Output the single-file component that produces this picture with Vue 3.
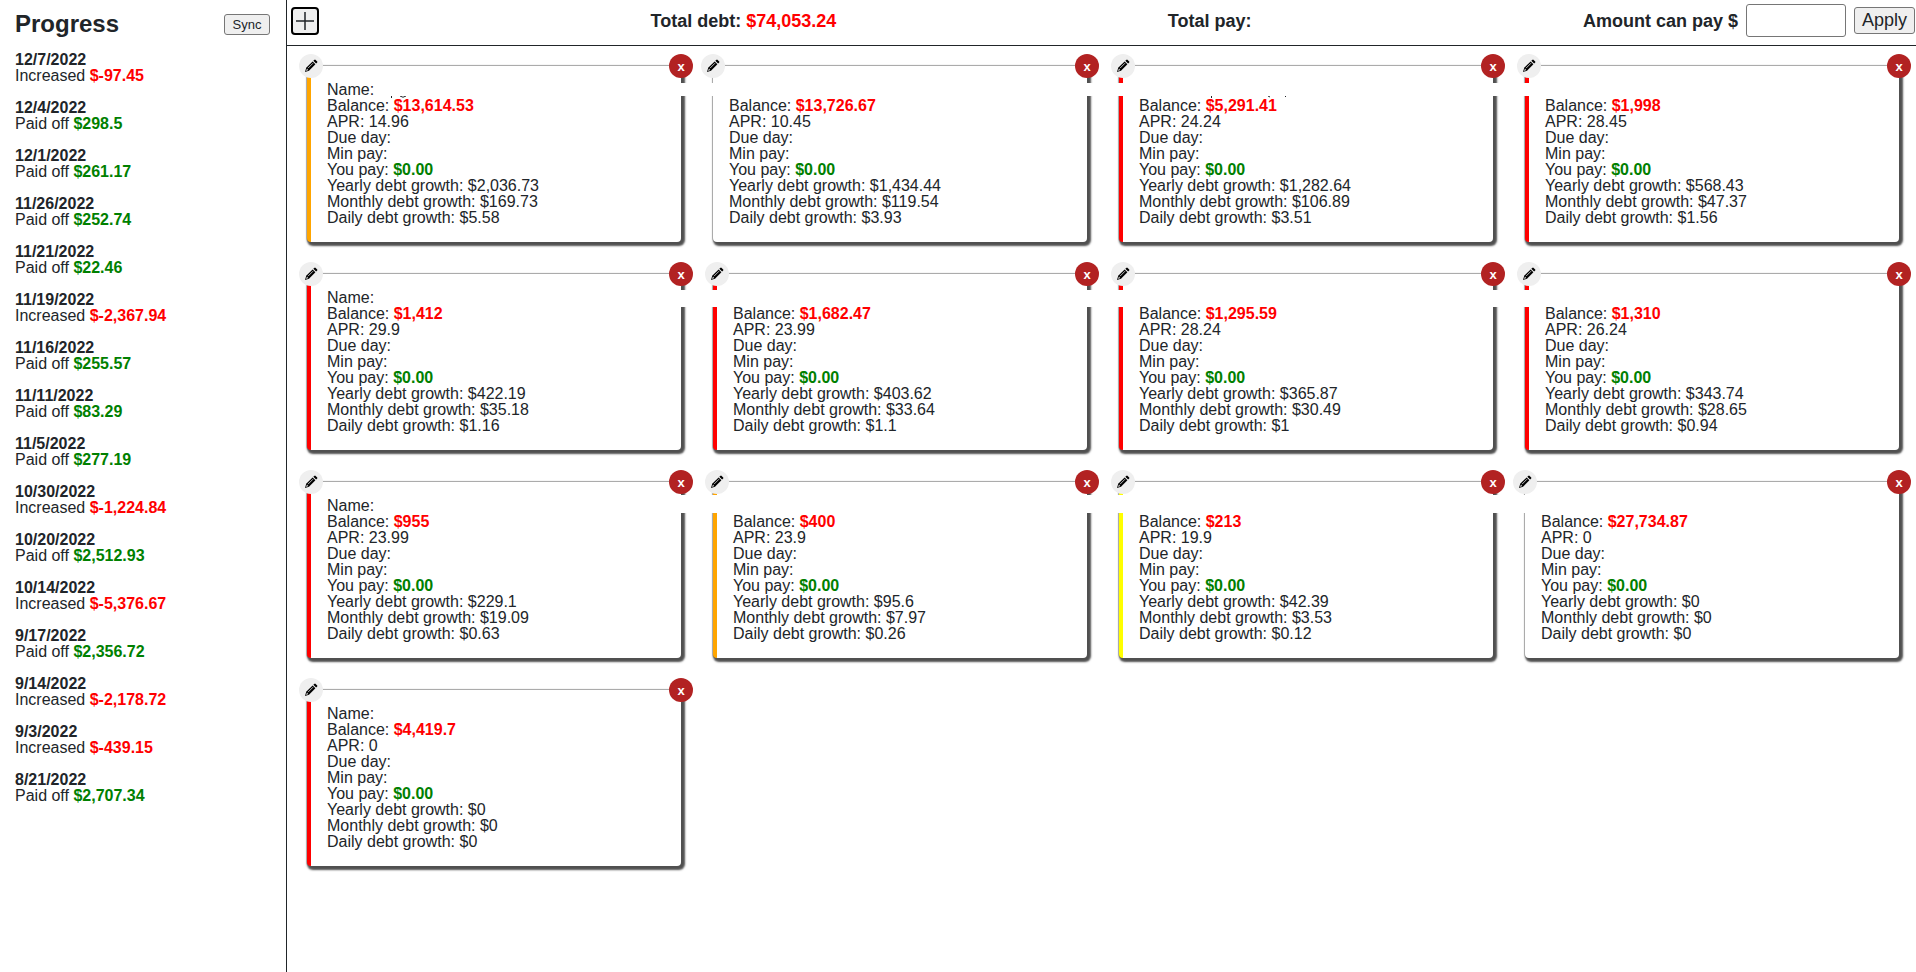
<script setup>
import { ref } from 'vue'

const amount = ref('')

const progress = [
  ['12/7/2022', '-97.45'],
  ['12/4/2022', '298.5'],
  ['12/1/2022', '261.17'],
  ['11/26/2022', '252.74'],
  ['11/21/2022', '22.46'],
  ['11/19/2022', '-2,367.94'],
  ['11/16/2022', '255.57'],
  ['11/11/2022', '83.29'],
  ['11/5/2022', '277.19'],
  ['10/30/2022', '-1,224.84'],
  ['10/20/2022', '2,512.93'],
  ['10/14/2022', '-5,376.67'],
  ['9/17/2022', '2,356.72'],
  ['9/14/2022', '-2,178.72'],
  ['9/3/2022', '-439.15'],
  ['8/21/2022', '2,707.34'],
].map(([date, value]) => ({ date, value, up: value.startsWith('-') }))

// Paths of the name descenders that stay visible below the cover
const tails = {
  0: 'M80.5 0V2M89 0Q92 2.5 95 0',
  2: 'M88.5 0V2M145 0L147 1M162 1L163 0',
}

// level, balance, apr, yearly, monthly, daily, extent and band of the name cover
const debts = [
  ['orange', '13,614.53', '14.96', '2,036.73', '169.73', '5.58', 'after', 'slim'],
  ['none', '13,726.67', '10.45', '1,434.44', '119.54', '3.93', 'full', 'slim'],
  ['red', '5,291.41', '24.24', '1,282.64', '106.89', '3.51', 'full', 'slim'],
  ['red', '1,998', '28.45', '568.43', '47.37', '1.56', 'before', 'slim'],
  ['red', '1,412', '29.9', '422.19', '35.18', '1.16', 'after', 'mid'],
  ['red', '1,682.47', '23.99', '403.62', '33.64', '1.1', 'full', 'mid'],
  ['red', '1,295.59', '28.24', '365.87', '30.49', '1', 'full', 'mid'],
  ['red', '1,310', '26.24', '343.74', '28.65', '0.94', 'before', 'mid'],
  ['red', '955', '23.99', '229.1', '19.09', '0.63', 'after', 'high'],
  ['orange', '400', '23.9', '95.6', '7.97', '0.26', 'full', 'high'],
  ['yellow', '213', '19.9', '42.39', '3.53', '0.12', 'full', 'high'],
  ['none', '27,734.87', '0', '0', '0', '0', 'before', 'high'],
  ['red', '4,419.7', '0', '0', '0', '0', 'open', ''],
].map(([level, balance, apr, yearly, monthly, daily, cover, band]) => ({
  level, balance, apr, yearly, monthly, daily, cover, band,
}))
</script>

<template>
  <div class="app">
    <aside class="sidebar">
      <div class="sidebar-head">
        <h1>Progress</h1>
        <button type="button" class="sync">Sync</button>
      </div>
      <ul class="history">
        <li v-for="p in progress" :key="p.date">
          <strong>{{ p.date }}</strong>
          <div>{{ p.up ? 'Increased' : 'Paid off' }} <b :class="p.up ? 'bad' : 'good'">${{ p.value }}</b></div>
        </li>
      </ul>
    </aside>

    <main class="main">
      <header class="bar">
        <button type="button" class="add" aria-label="Add debt">
          <svg width="18" height="18" viewBox="0 0 18 18"><path d="M9 0V18M0 9H18" stroke="#212529" stroke-width="1.5" /></svg>
        </button>
        <div>Total debt: <span class="bad">$74,053.24</span></div>
        <div>Total pay:</div>
        <form class="pay" @submit.prevent>
          <label for="amount">Amount can pay $</label>
          <input id="amount" v-model="amount" type="text">
          <button type="submit">Apply</button>
        </form>
      </header>

      <section class="grid">
        <article v-for="(d, i) in debts" :key="i" class="card" :class="d.level">
          <div>Name:</div>
          <div>Balance: <b class="bad">${{ d.balance }}</b></div>
          <div>APR: {{ d.apr }}</div>
          <div>Due day:</div>
          <div>Min pay:</div>
          <div>You pay: <b class="good">$0.00</b></div>
          <div>Yearly debt growth: ${{ d.yearly }}</div>
          <div>Monthly debt growth: ${{ d.monthly }}</div>
          <div>Daily debt growth: ${{ d.daily }}</div>
          <span v-if="d.cover !== 'open'" class="cover" :class="[d.cover, d.band]"></span>
          <svg v-if="tails[i]" class="tails" width="180" height="3" viewBox="0 0 180 3" aria-hidden="true">
            <path :d="tails[i]" fill="none" stroke="#212529" />
          </svg>
          <button type="button" class="round edit" aria-label="Edit">
            <svg width="14" height="14" viewBox="0 0 14 14">
              <path d="M1 13L2.2 8.8L8.6 2.4L11.4 5.2L5 11.8Z" fill="#000" />
              <path d="M9.3 1.8L10.6 .7Q11 .4 11.4 .8L13.2 2.5Q13.6 3 13.2 3.4L12.1 4.5Z" fill="#000" />
              <path d="M4 9.2L9 4.2" stroke="#efefef" stroke-width=".8" />
              <path d="M2.1 11.9L2.9 9.7L4.2 11Z" fill="#efefef" />
            </svg>
          </button>
          <button type="button" class="round remove">x</button>
        </article>
      </section>
    </main>
  </div>
</template>

<style>
body {
  margin: 0;
  background: #fff;
}
</style>

<style scoped>
.app {
  display: flex;
  min-height: 100vh;
  font: 16px/16px "Liberation Sans", Arial, sans-serif;
  color: #212529;
}
button,
input {
  box-sizing: border-box;
  font-family: inherit;
  color: inherit;
  border: 1px solid #767676;
  border-radius: 3px;
}
button {
  background: #efefef;
}
.bad {
  color: red;
}
.good {
  color: green;
}
.sidebar {
  box-sizing: border-box;
  flex: 0 0 287px;
  padding: 12px 16px 12px 15px;
  border-right: 1px solid #212529;
}
.sidebar-head {
  display: flex;
  align-items: center;
  justify-content: space-between;
  height: 24px;
  margin-bottom: 16px;
}
h1 {
  margin: 0;
  font-size: 24px;
  line-height: 24px;
}
.sync {
  height: 21px;
  width: 46px;
  padding: 0;
  font-size: 13px;
}
.history {
  margin: 0;
  padding: 0;
  list-style: none;
  display: grid;
  gap: 16px;
}
.history strong {
  display: block;
}
.main {
  flex: 1;
  min-width: 0;
}
.bar {
  display: flex;
  align-items: center;
  justify-content: space-between;
  box-sizing: border-box;
  height: 46px;
  padding: 0 1px 4px 4px;
  border-bottom: 1px solid #212529;
  font-size: 18px;
  line-height: 20px;
  font-weight: bold;
}
.add {
  display: grid;
  place-items: center;
  width: 28px;
  height: 28px;
  padding: 0;
  border: 2px solid #000;
  border-radius: 4px;
}
.pay {
  display: flex;
  align-items: center;
  gap: 8px;
}
.pay input {
  width: 100px;
  height: 33px;
  font-size: 18px;
}
.pay button {
  width: 61px;
  height: 27px;
  padding: 0;
  font-size: 18px;
}
.grid {
  display: grid;
  grid-template-columns: repeat(4, minmax(0, 1fr));
  gap: 32px;
  padding: 20px 17px 20px 20px;
}
.card {
  position: relative;
  padding: 16px;
  background: #fff;
  border-radius: 4px;
  box-shadow: 2px 2px 2px 2px #505050, 0 0 0 1px #ccc;
}
.red {
  border-left: 4px solid red;
}
.orange {
  border-left: 4px solid orange;
}
.yellow {
  border-left: 4px solid yellow;
}
.cover {
  position: absolute;
  left: -8px;
  right: -10px;
  background: #fff;
}
.cover.slim {
  top: 17px;
  height: 13px;
}
.cover.mid {
  top: 16px;
  height: 17px;
}
.cover.high {
  top: 13px;
  height: 18px;
}
.cover.after {
  left: 64px;
}
.cover.before {
  right: 32px;
}
.tails {
  position: absolute;
  top: 30px;
  left: 0;
}
.round {
  position: absolute;
  top: -12px;
  display: grid;
  place-items: center;
  width: 24px;
  height: 24px;
  padding: 0;
  border: 0;
  border-radius: 50%;
}
.edit {
  left: -12px;
}
.remove {
  right: -12px;
  background: #b22222;
  color: #fff;
  font-size: 13px;
  font-weight: bold;
}
</style>
